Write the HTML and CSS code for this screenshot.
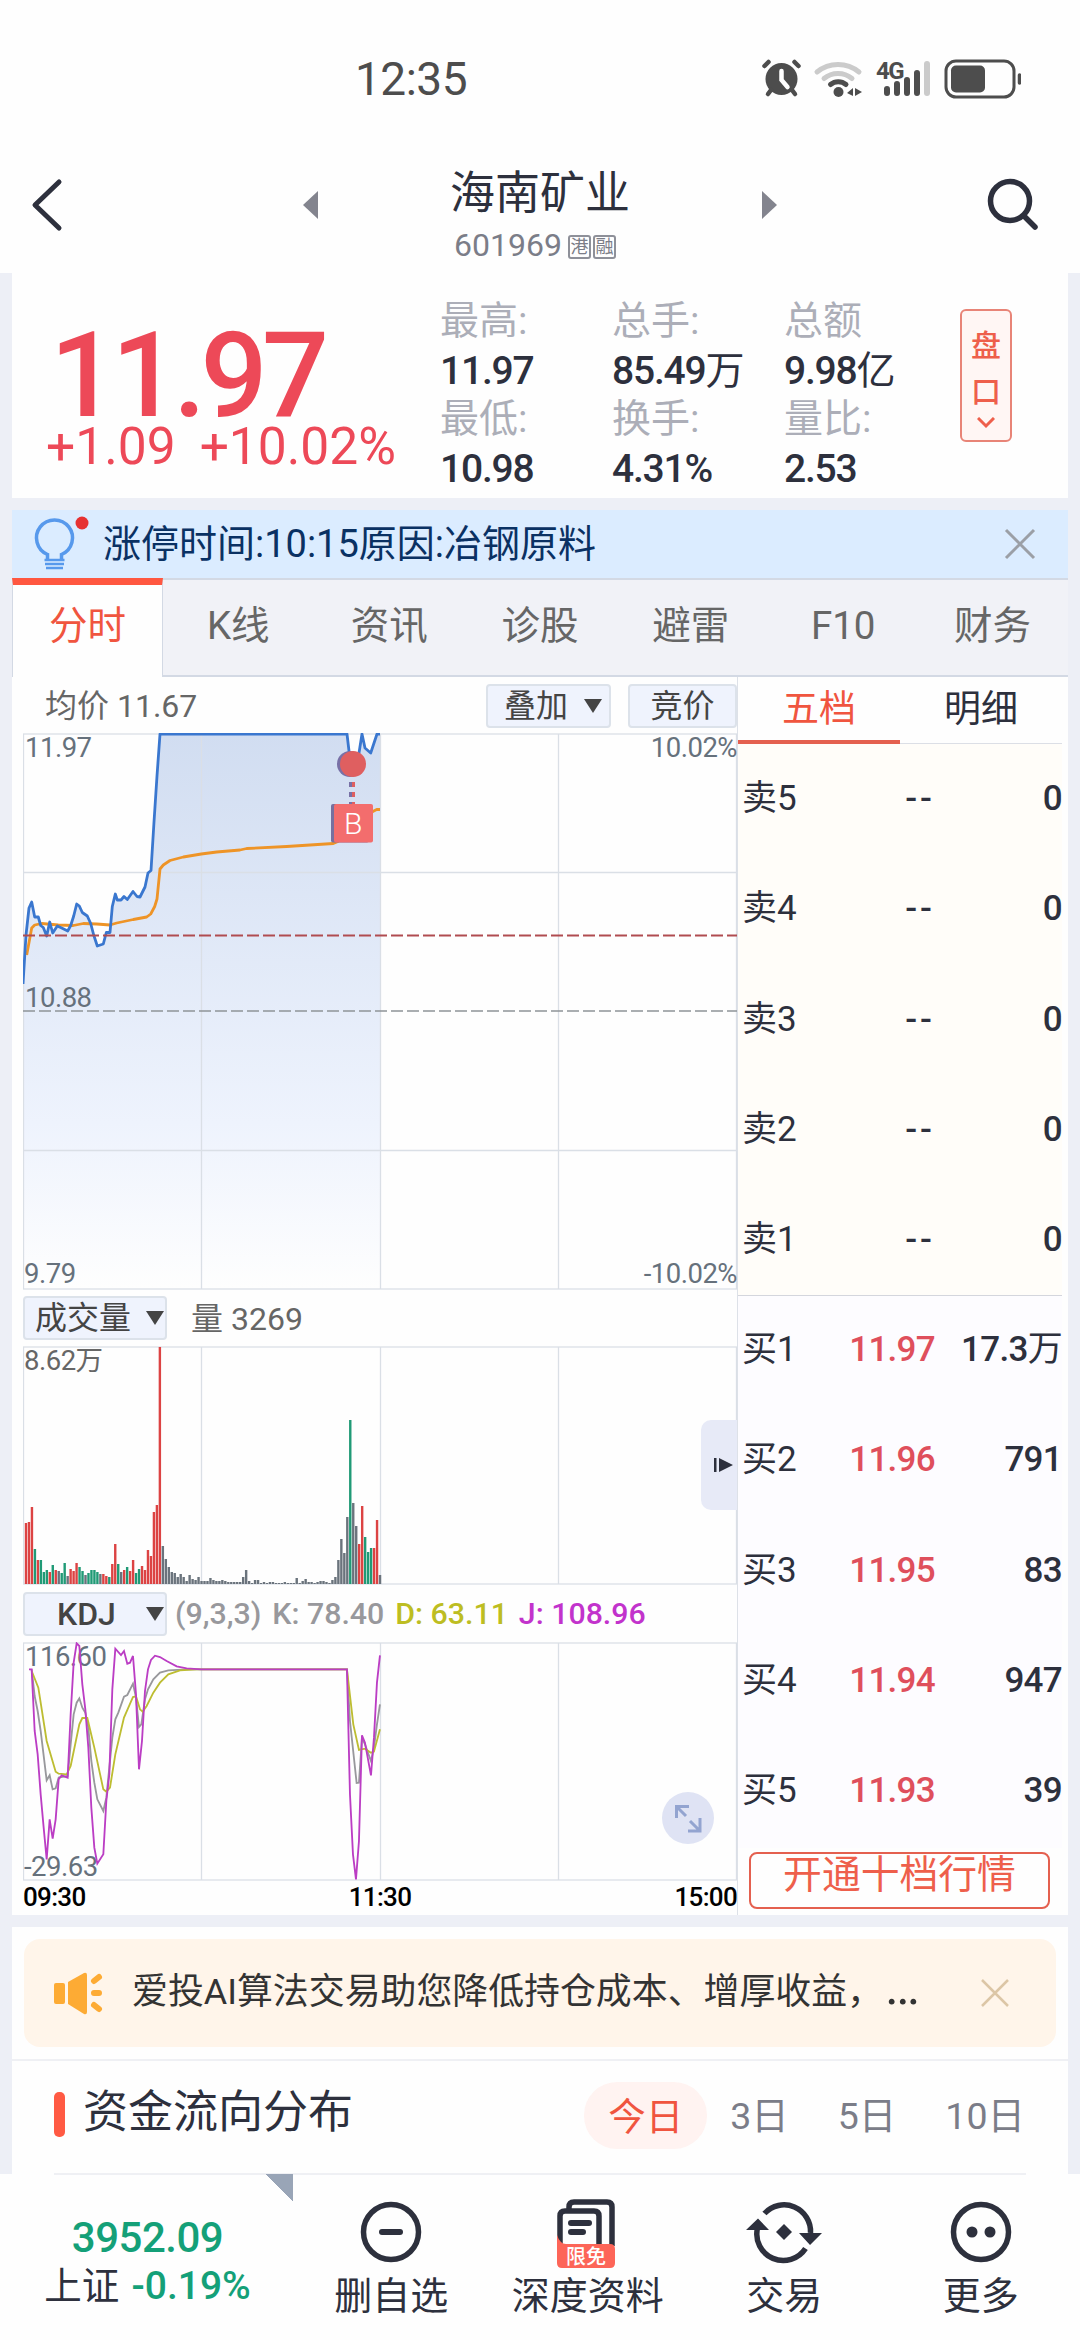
FILE: index.html
```html
<!DOCTYPE html>
<html lang="zh-CN">
<head>
    <meta charset="UTF-8">
    <meta name="viewport" content="width=device-width, initial-scale=1.0">
    <title>海南矿业 601969</title>
    <link rel="stylesheet" href="styles.css">
</head>
<body>
    <div class="status-bar">
        <span class="clock">12:35</span>
        <svg class="status-icons" width="270" height="46" viewBox="0 0 270 46">
            <g fill="#4d4d4d" stroke="#4d4d4d" stroke-linecap="round">
                <circle cx="30.500" cy="25" r="16" stroke="none"/>
                <path d="M13.500 12l4-4M47.500 12l-4-4" stroke-width="4.500"/>
                <path d="M20 36l-3 4M41 36l3 4" stroke-width="4.500"/>
                <path d="M30.500 17v9l6 7" fill="none" stroke="#fff" stroke-width="4.500"/>
                <g fill="none" stroke-width="5">
                    <path d="M66 18a33 33 0 0 1 42 0" stroke="#cbcbcb"/>
                    <path d="M73 24.500a22 22 0 0 1 28 0" stroke="#cbcbcb"/>
                    <path d="M79.500 30.500a12 12 0 0 1 15.500 0"/>
                </g>
                <circle cx="87.500" cy="38" r="5" stroke="none"/>
                <path d="M96 39l6-5v8zM104 34l7 4-7 4z" stroke="none"/>
                <path d="M136 35v4M146 30v9M156 26v13M166 19v20" stroke-width="6"/>
                <path d="M176 10v29" stroke="#cbcbcb" stroke-width="6"/>
                <rect x="195" y="7" width="68" height="36" rx="10" fill="none" stroke-width="3"/>
                <rect x="200" y="11.500" width="34" height="27" rx="5" stroke="none"/>
                <path d="M268.500 21v8" stroke-width="3.500"/>
            </g>
            <text x="125" y="25" class="net">4G</text>
        </svg>
    </div>

    <header class="nav">
        <svg class="back" width="34" height="54" viewBox="0 0 34 54"><path d="M29 4L5 27l24 23" fill="none" stroke="#2d303d" stroke-width="5" stroke-linecap="round" stroke-linejoin="round"/></svg>
        <i class="prev"></i>
        <div class="stock">
            <h1>海南矿业</h1>
            <p>601969<b>港</b><b>融</b></p>
        </div>
        <i class="next"></i>
        <svg class="search" width="54" height="54" viewBox="0 0 54 54"><g fill="none" stroke="#2d303d" stroke-width="5.500" stroke-linecap="round"><circle cx="24" cy="23" r="19.500"/><path d="M38 38l11 11"/></g></svg>
    </header>

    <main>
        <section class="quote">
            <div class="price">
                <strong>11.97</strong>
                <p><span>+1.09</span><span>+10.02%</span></p>
            </div>
            <dl class="stats">
                <div><dt>最高:</dt><dd>11.97</dd><dt>最低:</dt><dd>10.98</dd></div>
                <div><dt>总手:</dt><dd>85.49<i>万</i></dd><dt>换手:</dt><dd>4.31%</dd></div>
                <div><dt>总额</dt><dd>9.98<i>亿</i></dd><dt>量比:</dt><dd>2.53</dd></div>
            </dl>
            <button class="pankou">盘<br>口<svg width="18" height="12" viewBox="0 0 18 12"><path d="M1 1l8 8 8-8" fill="none" stroke="#ee5f4b" stroke-width="3"/></svg></button>
        </section>

        <section class="notice">
            <svg class="bulb" width="58" height="56" viewBox="0 0 58 56">
                <g fill="none" stroke="#5799ec" stroke-width="3.500">
                    <path d="M15.500 45v-4.500A18 18 0 1 1 29.500 40.500V45"/>
                    <path d="M12.500 46h20M13 50h19M14 54h17" stroke-width="2.500"/>
                </g>
                <circle cx="50" cy="9" r="6.500" fill="#e63232"/>
            </svg>
            <span>涨停时间:10:15原因:冶钢原料</span>
            <svg width="32" height="32" viewBox="0 0 32 32"><path d="M2 2l28 28M30 2L2 30" stroke="#9b9fa6" stroke-width="3"/></svg>
        </section>

        <nav class="tabs">
            <a class="active">分时</a><a>K线</a><a>资讯</a><a>诊股</a><a>避雷</a><a class="latin">F10</a><a>财务</a>
        </nav>

        <section class="board">
            <div class="charts">
                <div class="bar bar-top">
                    <span>均价 11.67</span>
                    <button class="btn-overlay">叠加<i></i></button>
                    <button class="btn-auction">竞价</button>
                </div>

                <svg class="chart" width="714" height="557" viewBox="0 0 714 557">
                    <defs>
                        <linearGradient id="fill" x1="0" y1="0" x2="0" y2="1">
                            <stop offset="0" stop-color="#d1ddf1"/>
                            <stop offset=".7" stop-color="#eef3fd"/>
                            <stop offset="1" stop-color="#fefefe"/>
                        </linearGradient>
                    </defs>
                    <path id="area" fill="url(#fill)"/>
                    <g class="grid">
                        <path d="M0 139.500h714M0 417.500h714M178.500 1v555M357.500 1v555M535.500 1v555"/>
                        <rect x=".5" y="1" width="713" height="555"/>
                    </g>
                    <path d="M0 278h714" stroke="#8f9498" stroke-width="1.300" stroke-dasharray="12 4"/>
                    <polyline class="avg" points="3.700,222 8.700,195 11.700,192 18.700,190.500 35.300,192 50.300,192.500 60.300,190.500 73.700,191 87,192 93.700,190 110.300,186.500 123.700,184 127.700,181 131.700,173.500 134,166 137,136 140.300,132 147,127.500 160.300,124 178.300,121 193.700,119 217,117 223.700,115.500 263.700,113.500 310.300,110.500 315,108.500 347,80 353.700,76.500 357,76.500"/>
                    <polyline id="line" class="price-line" points="0,251 3,202 6,175 8.700,169 11.700,184 15.300,184 17.700,192.500 20.300,194.500 23.700,203 26.700,189 29.700,200 34.300,193 38.700,195 44.700,198 47.700,192.500 50.700,183 53.700,171 56.300,173 59.300,179.500 64.300,183 67.700,190.500 70.700,202 74.300,213 80.300,211 83.300,199.500 87,199.500 89.300,173.500 92.300,161 94.300,167 98,167 101,163.500 104.300,166.500 110,158.500 114,163.500 117,164 122,154 125,140 128,137.500 131,89 134,43 137,1 324,1 326,18 330,32 336,20 339,1 342,15 347.700,20 354,1 357,1"/>
                    <path d="M0 202.500h714" stroke="#b04c50" stroke-width="2" stroke-dasharray="12 4"/>
                    <circle cx="327" cy="31" r="13" fill="#7870a6"/>
                    <circle cx="330" cy="31" r="13" fill="#df5f60"/>
                    <path d="M327.500 49v22" stroke="#7870a6" stroke-width="3" stroke-dasharray="5 5"/>
                    <path d="M330.500 49v22" stroke="#df5f60" stroke-width="3" stroke-dasharray="5 5"/>
                    <rect x="308" y="71" width="38" height="38.500" rx="2" fill="#77709f"/>
                    <rect x="311" y="71" width="39" height="38.500" rx="2" fill="#f36d6d"/>
                    <text x="321" y="100.500" class="mark">B</text>
                    <text x="2" y="24">11.97</text>
                    <text x="2" y="273.500">10.88</text>
                    <text x="1" y="549.500">9.79</text>
                    <text x="714" y="24" class="end">10.02%</text>
                    <text x="714" y="549.500" class="end">-10.02%</text>
                </svg>

                <div class="bar bar-mid">
                    <button>成交量<i></i></button>
                    <span class="vol">量 3269</span>
                </div>

                <div class="volume">
                    <svg class="chart" width="714" height="239" viewBox="0 0 714 239">
                        <g class="grid">
                            <path d="M178.500 1v237M357.500 1v237M535.500 1v237"/>
                            <rect x=".5" y="1" width="713" height="237"/>
                        </g>
                        <g id="bars"></g>
                        <text x="1" y="24" class="dark">8.62万</text>
                    </svg>
                    <div class="handle"><svg width="20" height="16" viewBox="0 0 20 16"><path d="M1 1h2.500v14H1zM6 1l14 7-14 7z" fill="#2d303d"/></svg></div>
                </div>

                <div class="bar bar-kdj">
                    <button>KDJ<i></i></button>
                    <span class="k">(9,3,3)</span><span class="k">K: 78.40</span><span class="d">D: 63.11</span><span class="j">J: 108.96</span>
                </div>

                <div class="kdj">
                    <svg class="chart" width="714" height="239" viewBox="0 0 714 239">
                        <g class="grid">
                            <path d="M178.500 1v237M357.500 1v237M535.500 1v237"/>
                            <rect x=".5" y="1" width="713" height="237"/>
                        </g>
                        <text x="2" y="24">116.60</text>
                        <text x="1" y="234">-29.63</text>
                        <g class="curves" transform="scale(.3333) translate(-69 -183)">
                            <polyline stroke="#98989c" points="95,265 104,345 113,390 122,450 140,598 149,583 158,625 167,622 176,590 203,585 212,490 221,400 230,365 238,352 247,380 256,395 265,440 274,540 283,605 292,655 310,690 319,650 328,560 337,470 346,415 355,395 372,347 382,342 399,308 408,350 417,438 424,430 435,355 444,325 460,295 480,275 505,268 560,265 1041,265 1050,420 1070,606 1077,605 1086,470 1095,490 1113,540 1122,500 1131,430 1140,370"/>
                            <polyline stroke="#bdbd31" points="95,270 115,320 140,480 167,572 176,578 200,580 212,555 238,430 247,411 262,411 283,500 310,625 319,632 330,620 346,520 372,410 399,348 408,346 420,385 428,392 440,375 460,335 480,305 505,280 540,268 590,265 1041,265 1060,430 1077,507 1095,503 1113,515 1122,512 1140,445"/>
                            <polyline stroke="#bb3dc4" points="87,265 95,265 104,450 113,520 122,640 131,740 140,835 149,715 158,773 167,715 176,595 185,583 203,590 212,400 221,245 230,187 238,195 247,310 256,385 265,500 274,680 283,800 292,848 310,820 319,660 328,580 337,325 346,203 363,222 372,210 382,248 390,245 399,225 408,340 417,565 426,480 435,330 444,265 453,237 465,224 480,228 500,240 530,256 560,262 604,265 1041,265 1050,640 1059,820 1068,895 1077,780 1086,463 1095,485 1113,583 1122,470 1131,305 1140,223"/>
                        </g>
                    </svg>
                    <svg class="expand" width="52" height="52" viewBox="0 0 52 52"><circle cx="26" cy="26" r="26" fill="#dfe3f4"/><path d="M14.500 26V14.500H27M15 15l9 9M38 26v13H26M37 38l-9-9" fill="none" stroke="#93a4d0" stroke-width="3"/></svg>
                </div>
                <div class="times"><span>09:30</span><span>11:30</span><span>15:00</span></div>
            </div>

            <div class="depth">
                <div class="depth-tabs"><a class="active">五档</a><a>明细</a></div>
                <ul class="sell">
                    <li><span>卖5</span><em>--</em><b>0</b></li>
                    <li><span>卖4</span><em>--</em><b>0</b></li>
                    <li><span>卖3</span><em>--</em><b>0</b></li>
                    <li><span>卖2</span><em>--</em><b>0</b></li>
                    <li><span>卖1</span><em>--</em><b>0</b></li>
                </ul>
                <ul class="buy">
                    <li><span>买1</span><em>11.97</em><b>17.3<i>万</i></b></li>
                    <li><span>买2</span><em>11.96</em><b>791</b></li>
                    <li><span>买3</span><em>11.95</em><b>83</b></li>
                    <li><span>买4</span><em>11.94</em><b>947</b></li>
                    <li><span>买5</span><em>11.93</em><b>39</b></li>
                </ul>
                <button class="open-ten">开通十档行情</button>
            </div>
        </section>

        <section class="promo-wrap">
            <div class="promo">
                <svg width="50" height="44" viewBox="0 0 50 44"><g fill="#fdab34"><rect x="0" y="12" width="11" height="21" rx="2"/><path d="M14 11L30 2q3-1 3 2v37q0 3-3 2L14 33z"/><path d="M40 10l5-4M40 22h5M40 34l5 4" stroke="#fdab34" stroke-width="6" stroke-linecap="round"/></g></svg>
                <p>爱投AI算法交易助您降低持仓成本、增厚收益，<span>…</span></p>
                <svg width="30" height="30" viewBox="0 0 30 30"><path d="M2 2l26 26M28 2L2 28" stroke="#dcc6a6" stroke-width="2.500"/></svg>
            </div>
        </section>

        <section class="flow">
            <h2>资金流向分布</h2>
            <div class="days"><a class="active">今日</a><a>3日</a><a>5日</a><a>10日</a></div>
        </section>
    </main>

    <footer>
        <div class="index">
            <strong>3952.09</strong>
            <p>上证 <span>-0.19%</span></p>
        </div>
        <a>
            <svg width="80" height="72" viewBox="0 0 80 72"><circle cx="40" cy="34" r="27.500" fill="none" stroke="#2d303d" stroke-width="5.500"/><path d="M31 34h18" stroke="#2d303d" stroke-width="6" stroke-linecap="round"/></svg>
            删自选
        </a>
        <a>
            <svg width="80" height="72" viewBox="0 0 80 72">
                <g fill="none" stroke="#2d303d" stroke-width="5.500">
                    <path d="M21 13V9q0-5 5-5h33q5 0 5 5v39"/>
                    <path d="M12 48V18q0-5 5-5h29q5 0 5 5v30"/>
                    <path d="M23 25h18M23 34h12" stroke-width="6" stroke-linecap="round"/>
                </g>
                <path d="M9 37q3 9 9 9h44q5 0 5 5v14q0 5-5 5H14q-5 0-5-5z" fill="#fd6558"/>
                <text x="18" y="66" class="free">限免</text>
            </svg>
            深度资料
        </a>
        <a>
            <svg width="80" height="72" viewBox="0 0 80 72">
                <g fill="none" stroke="#2d303d" stroke-width="5.500"><path d="M20.500 15.500A26.500 26.500 0 0 1 66.500 35"/><path d="M13.500 30A26.500 26.500 0 0 0 61.500 50.500"/></g>
                <path d="M2 32l12-11.500L25 32zM55 35h23L66 47zM40 26l8 8-8 8-8-8z" fill="#2d303d"/>
            </svg>
            交易
        </a>
        <a>
            <svg width="80" height="72" viewBox="0 0 80 72"><circle cx="40" cy="34" r="27.500" fill="none" stroke="#2d303d" stroke-width="5.500"/><circle cx="31" cy="34" r="5.500" fill="#2d303d"/><circle cx="49" cy="34" r="5.500" fill="#2d303d"/></svg>
            更多
        </a>
    </footer>

    <script>
        // 每分钟成交量: 颜色 + 高度 (r 涨, g 跌, n 平)
        const volumes = 'r61 r62 r77 g35 r24 g24 g12 g14 r12 g19 r14 n13 g11 g21 n8 r15 r13 r21 g17 g13 n9 g11 g14 g14 g12 n10 r10 r8 g7 r20 r40 g20 n12 r14 g17 r13 r24 g11 g15 r18 r14 r34 r28 r72 r79 r237 ' +
            'n38 n25 n17 n12 n11 n7 n10 n7 n3 n9 n5 n4 n7 n3 n3 n3 n6 n4 n3 n3 n4 n3 n2 n2 n2 n2 n2 n7 n14 n3 n1 n4 n4 n1 n2 n1 n2 n2 n1 n1 n1 n2 n1 n1 n1 n6 n1 n3 n5 n2 n2 n1 n2 n3 n3 n2 n1 n4 n7 ' +
            'n24 n45 n31 n67 g164 n81 n58 r40 r78 g47 g32 g36 r36 r64 n9';
        const colors = { r: '#dc4343', g: '#209a76', n: '#6a737c' };
        const bars = document.getElementById('bars');

        volumes.split(' ').forEach((item, i) => {
            const height = Number(item.slice(1));
            const rect = document.createElementNS('http://www.w3.org/2000/svg', 'rect');
            rect.setAttribute('x', 1.8 + i * 2.975);
            rect.setAttribute('y', 238 - height);
            rect.setAttribute('width', 2.4);
            rect.setAttribute('height', height);
            rect.setAttribute('fill', colors[item[0]]);
            bars.appendChild(rect);
        });

        // 分时线下方的填充区域
        const points = document.getElementById('line').getAttribute('points');
        document.getElementById('area').setAttribute('d', 'M' + points.split(' ').join('L') + 'V556H0Z');
    </script>
</body>
</html>
```
FILE: styles.css
```css
* {
    box-sizing: border-box;
    margin: 0;
    padding: 0;
}
body {
    width: 1080px;
    height: 2340px;
    overflow: hidden;
    background-color: #fefefe;
    color: #2d303d;
    font-family: Roboto, "Noto Sans CJK SC", sans-serif;
}
svg {
    display: block;
    flex: none;
}
button {
    font-family: inherit;
    color: #444;
}
em, i {
    font-style: normal;
    font-weight: 400;
}

/* 状态栏 */
.status-bar {
    height: 134px;
    padding: 54px 59px 0 355px;
    display: flex;
    justify-content: space-between;
    color: #4d4d4d;
}
.clock {
    font-size: 46px;
    line-height: 51px;
    letter-spacing: -0.500px;
}
.net {
    font-size: 24px;
    font-weight: 700;
    letter-spacing: -1.5px;
    fill: #4d4d4d;
}

/* 导航 */
.nav {
    height: 139px;
    padding: 0 40px 0 30px;
    display: flex;
    align-items: flex-start;
}
.nav .back {
    margin-top: 44px;
}
.prev, .next {
    margin-top: 57px;
    border: 14px solid transparent;
}
.prev {
    margin-left: 239px;
    border-left: 0;
    border-right: 15px solid #83848e;
}
.next {
    border-right: 0;
    border-left: 15px solid #83848e;
}
.stock {
    width: 444px;
    text-align: center;
}
h1 {
    margin-top: 32px;
    font-size: 45px;
    font-weight: 400;
    line-height: 56px;
}
.stock p {
    margin-top: 6px;
    padding-right: 10px;
    display: flex;
    align-items: center;
    justify-content: center;
    font-size: 32px;
    line-height: 34px;
    color: #7b7d88;
}
.stock b {
    width: 23px;
    height: 24px;
    margin: 4px 0 0 2px;
    border: 2px solid #8e9099;
    border-radius: 3px;
    font-size: 18px;
    font-weight: 400;
    line-height: 20px;
}
.stock b:first-of-type {
    margin-left: 6px;
}
.search {
    margin: 44px 0 0 auto;
}

main {
    height: 1901px;
    padding: 0 12px;
    background-color: #edeff6;
}

/* 行情 */
.quote {
    height: 225px;
    display: flex;
    background-color: #fefefe;
}
.price {
    width: 428px;
    padding: 59px 0 0 34px;
    color: #ed4958;
}
.price strong {
    display: block;
    margin-left: 4px;
    font-size: 118px;
    font-weight: 500;
    line-height: 88px;
    letter-spacing: -5.500px;
}
.price p {
    display: flex;
    gap: 24px;
    font-size: 51.500px;
    line-height: 54px;
    white-space: nowrap;
}
.stats {
    width: 520px;
    padding-top: 25px;
    display: grid;
    grid-template-columns: 172px 172px 176px;
    font-size: 39px;
    line-height: 49px;
    white-space: nowrap;
}
.stats dt {
    color: #acaeb8;
    margin-top: -1px;
    margin-bottom: 1px;
}
.stats dd {
    font-weight: 500;
    letter-spacing: -1.200px;
}
.pankou {
    width: 52px;
    height: 133px;
    margin-top: 36px;
    border: 2px solid #e88477;
    border-radius: 6px;
    background-color: #fff6f4;
    color: #ee5f4b;
    font-size: 30px;
    font-weight: 500;
    line-height: 46px;
}
.pankou svg {
    margin: 2px auto 0;
}

/* 提示 */
.notice {
    height: 68px;
    margin-top: 12px;
    padding: 0 32px 0 20px;
    display: flex;
    align-items: center;
    background-color: #dbecff;
    color: #0a3163;
    font-size: 38px;
}
.notice span {
    flex: 1;
    margin-left: 13px;
    line-height: 60px;
}
.notice .bulb {
    margin-bottom: 4px;
}

.tabs {
    height: 99px;
    display: flex;
    border-top: 2px solid #d3d9e4;
    border-bottom: 2px solid #d3d9e4;
    background-color: #f1f2f7;
}
.tabs a {
    width: 151px;
    text-align: center;
    font-size: 38.500px;
    line-height: 92px;
    color: #666;
}
.tabs .latin {
    padding-left: 3px;
}
.tabs a.active {
    height: 99px;
    margin-top: -2px;
    border-top: 7px solid #ff5740;
    border-left: 1px solid #d3d9e4;
    border-right: 1px solid #d3d9e4;
    background-color: #fefefe;
    color: #f0553f;
    line-height: 82px;
}

/* 图表 */
.board {
    height: 1238px;
    display: flex;
    background-color: #fefefe;
}
.charts {
    width: 726px;
    padding-left: 11px;
    border-right: 1px solid #dde1e8;
}
.bar {
    width: 714px;
    display: flex;
    align-items: center;
    font-size: 32px;
    color: #666;
}
.bar button {
    width: 144px;
    height: 44px;
    padding: 0 1px 0 10px;
    display: flex;
    align-items: center;
    justify-content: space-between;
    border: 2px solid #dce2ea;
    border-radius: 4px;
    background-color: #eff3fd;
    font-size: 32px;
    line-height: 38px;
}
.bar button i {
    border: 9px solid transparent;
    border-top: 14px solid #444;
    border-bottom: 0;
}
.bar-top {
    height: 56px;
    padding: 1px 0 0 22px;
}
.bar-top span {
    flex: 1;
    margin-top: -5px;
}
.bar .btn-overlay {
    width: 125px;
    padding: 0 7px 0 16px;
    margin-right: 17px;
}
.bar .btn-auction {
    width: 109px;
    justify-content: center;
    padding: 0;
}
.bar-mid {
    height: 56px;
}
.vol {
    margin: -5px 0 0 24px;
}
.bar-kdj {
    height: 57px;
    gap: 11px;
    font-size: 30.300px;
    font-weight: 500;
    white-space: nowrap;
}
.bar-kdj button {
    padding-left: 32px;
    margin-right: -3px;
    font-weight: 500;
}
.k {
    color: #98989c;
}
.d {
    color: #bdbd22;
}
.j {
    color: #c233cc;
}
.chart text {
    font-size: 27.500px;
    letter-spacing: -0.500px;
    fill: #66717c;
}
.chart .end {
    text-anchor: end;
}
.chart .dark {
    fill: #666;
}
.chart .mark {
    font-size: 30px;
    fill: #fff;
    font-weight: 300;
}
.grid {
    fill: none;
    stroke: #dadfe6;
    stroke-width: 1.300;
}
.avg, .price-line {
    fill: none;
    stroke: #ee9427;
    stroke-width: 2.800;
    stroke-linejoin: round;
}
.price-line {
    stroke: #3a77cf;
}
.curves {
    fill: none;
    stroke-width: 5.500;
}
.volume, .kdj {
    position: relative;
    width: 714px;
}
.handle {
    position: absolute;
    top: 74px;
    right: 0;
    width: 36px;
    height: 90px;
    padding: 37px 0 0 12px;
    border-radius: 10px 0 0 10px;
    background-color: #e7eaf7;
}
.expand {
    position: absolute;
    right: 23px;
    bottom: 37px;
}
.times {
    width: 714px;
    display: flex;
    justify-content: space-between;
    font-size: 26px;
    font-weight: 500;
    line-height: 32px;
    letter-spacing: -0.700px;
    color: #000;
}

/* 五档 */
.depth {
    flex: 1;
    padding-right: 7px;
}
.depth-tabs {
    height: 67px;
    display: flex;
    border-bottom: 1px solid #dcdfe6;
    font-size: 37px;
    line-height: 66px;
    text-align: center;
}
.depth-tabs a {
    width: 162px;
    height: 67px;
}
.depth-tabs .active {
    border-bottom: 4px solid #e4604f;
    color: #f0553f;
}
.depth ul {
    height: 552px;
    list-style: none;
}
.depth li {
    height: 110.300px;
    padding: 0 0 1px 4px;
    display: grid;
    grid-template-columns: 66px 127px 1fr;
    align-items: baseline;
    font-size: 35px;
    line-height: 108px;
}
.depth li span {
    white-space: nowrap;
}
.depth em, .depth b {
    font-weight: 500;
    letter-spacing: -0.700px;
    text-align: right;
    white-space: nowrap;
}
.sell {
    padding-top: 1px;
    background-color: #fffdf9;
    border-bottom: 1px solid #d4d6dd;
}
.depth .sell em {
    letter-spacing: 3px;
    padding-right: 0;
}
.buy {
    background-color: #fdfcff;
}
.buy em {
    color: #df4f5c;
}
.open-ten {
    display: block;
    width: 301px;
    height: 57px;
    margin: 4px 0 0 11px;
    border: 2px solid #e4604f;
    border-radius: 8px;
    background-color: #fefefe;
    color: #ee5f4b;
    font-size: 38.800px;
    line-height: 38px;
    padding-bottom: 12px;
}

/* 广告条 */
.promo-wrap {
    height: 134px;
    margin-top: 12px;
    padding: 12px;
    border-bottom: 2px solid #eff0f4;
    background-color: #fefefe;
}
.promo {
    height: 108px;
    padding: 0 46px 0 30px;
    display: flex;
    align-items: center;
    border-radius: 16px;
    background-color: #fff5ea;
    color: #333;
}
.promo p {
    flex: 1;
    margin: -3px 0 0 28px;
    font-size: 35.900px;
    line-height: 52px;
    white-space: nowrap;
}
.promo span {
    margin-left: 2px;
    font-size: 52px;
    line-height: 36px;
}

.flow {
    height: 114px;
    padding: 0 43px 10px 42px;
    display: flex;
    align-items: center;
    justify-content: space-between;
    background: linear-gradient(#eff0f4, #eff0f4) center bottom / 972px 2px no-repeat #fefefe;
}
h2 {
    display: flex;
    align-items: center;
    font-size: 45px;
    font-weight: 400;
    line-height: 60px;
}
h2::before {
    content: "";
    width: 11px;
    height: 45px;
    margin: 2px 18px 0 0;
    border-radius: 5px;
    background-color: #ff5a43;
}
.days {
    display: flex;
    align-items: center;
    font-size: 37.500px;
    line-height: 70px;
    color: #7b7d88;
    padding-top: 4px;
}
.days a {
    margin-left: 49px;
    padding-top: 2px;
}
.days a.active {
    width: 123px;
    height: 67px;
    margin: 0 -26px 0 0;
    border-radius: 33px;
    background-color: #fff3f1;
    color: #f0553f;
    text-align: center;
    line-height: 67px;
}

/* 底部 */
footer {
    height: 166px;
    display: flex;
}
.index {
    width: 293px;
    padding: 38px 0 0 2px;
    text-align: center;
    color: #14a078;
    background: linear-gradient(to top right, transparent 50%, #99a5b7 50%) right top / 27px 27px no-repeat;
}
.index strong {
    display: block;
    font-size: 42px;
    font-weight: 500;
    line-height: 52px;
    letter-spacing: -0.500px;
}
.index p {
    font-size: 37.500px;
    line-height: 44px;
    color: #2d303d;
}
.index span {
    margin-left: 3px;
    font-size: 39px;
    font-weight: 500;
    color: #14a078;
}
footer a {
    width: 196.500px;
    padding-top: 24px;
    text-align: center;
    font-size: 38px;
    line-height: 52px;
    color: #2d303d;
}
footer a svg {
    margin: 0 auto;
}
.free {
    font-size: 20px;
    font-weight: 500;
    fill: #fff;
}
```
